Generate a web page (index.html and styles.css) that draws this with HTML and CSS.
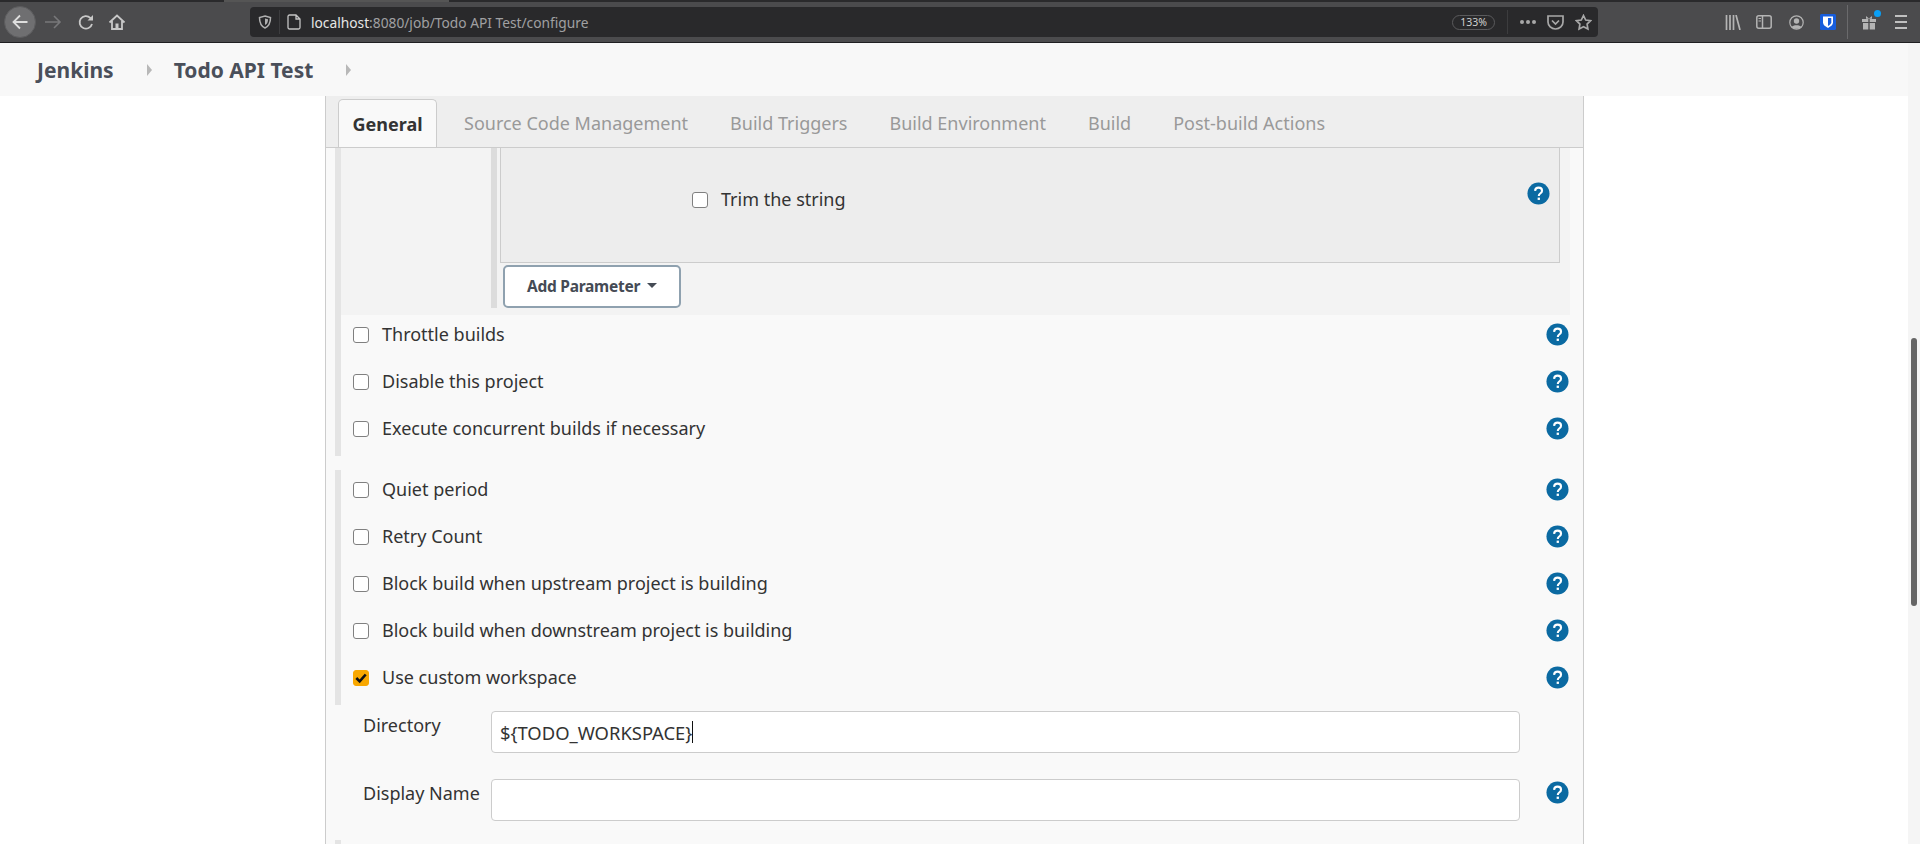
FILE: index.html
```html
<!DOCTYPE html>
<html lang="en">
<head>
<meta charset="utf-8">
<title>Todo API Test Config</title>
<link rel="stylesheet" href="styles.css">
</head>
<body>
<svg class="sprite" width="0" height="0" aria-hidden="true">
  <symbol id="help" viewBox="0 0 24 24">
    <circle cx="12" cy="12" r="11.5" fill="#0b6aa2"/>
    <path d="M8.4 9.2c.2-2.2 1.700-3.300 3.700-3.300 2.100 0 3.600 1.300 3.600 3.100 0 1.500-.8 2.200-1.900 3-1 .7-1.500 1.200-1.500 2.500" fill="none" stroke="#fff" stroke-width="2.200"/>
    <rect x="11.100" y="16.300" width="2.400" height="2.400" fill="#fff"/>
  </symbol>
</svg>
<div class="app">
  <header class="browser">
    <div class="tabstrip"><span class="strip-dark strip-a"></span><span class="strip-gap"></span><span class="strip-dark strip-b"></span></div>
    <div class="toolbar">
      <div class="nav">
        <span class="back"><svg width="20" height="20" viewBox="0 0 20 20"><path d="M17.500 10H3.500M10 3.500 3.500 10l6.500 6.500" fill="none" stroke="#dedede" stroke-width="1.800"/></svg></span>
        <span class="tb tb-fwd"><svg width="18" height="18" viewBox="0 0 18 18"><path d="M1 9h15M10 3l6 6-6 6" fill="none" stroke="#78787a" stroke-width="1.600"/></svg></span>
        <span class="tb tb-reload"><svg width="18" height="18" viewBox="0 0 18 18"><path d="M15 11a6.300 6.300 0 1 1-1.700-6.200L15 6.500" fill="none" stroke="#c8c8c8" stroke-width="1.800"/><path d="M16 2v5.500h-5.500z" fill="#c8c8c8"/></svg></span>
        <span class="tb tb-home"><svg width="18" height="18" viewBox="0 0 18 18"><path d="M1.500 9.500 9 2.500l7.500 7M4 8v8h10V8" fill="none" stroke="#c8c8c8" stroke-width="1.800"/><rect x="7.500" y="10.500" width="3" height="5" fill="#c8c8c8"/></svg></span>
      </div>
      <div class="urlbar">
        <svg class="shield" width="14" height="14" viewBox="0 0 14 14"><path d="M7 1 12.500 2.500c0 5-1 8.500-5.500 10.500C2.500 11 1.500 7.500 1.500 2.500z" fill="none" stroke="#b0b0b0" stroke-width="1.500"/><path d="M7 3.500 10 4.300c0 2.700-.6 4.500-3 5.700z" fill="#b0b0b0"/></svg>
        <span class="url-sep"></span>
        <svg class="page" width="14" height="16" viewBox="0 0 14 16"><path d="M1 2.500A1.500 1.500 0 0 1 2.500 1H9l4 4v8.500a1.500 1.500 0 0 1-1.500 1.500h-9A1.500 1.500 0 0 1 1 13.500zM9 1v4h4" fill="none" stroke="#c4c4c4" stroke-width="1.300"/></svg>
        <span class="url"><span class="host">localhost</span>:8080/job/Todo API Test/configure</span>
        <span class="zoomlevel">133%</span>
        <span class="url-sep url-sep-b"></span>
        <span class="dots"><i></i><i></i><i></i></span>
        <svg class="pocket" width="17" height="15" viewBox="0 0 17 15"><path d="M1 1h15v6a7.500 7 0 0 1-15 0zM5 5.500l3.500 3.500L12 5.500" fill="none" stroke="#a8a8a8" stroke-width="1.700"/></svg>
        <svg class="star" width="17" height="17" viewBox="0 0 17 17"><path d="M8.500 1.500 10.700 6l4.900.7-3.500 3.400.8 4.900-4.400-2.300L4.100 15l.8-4.900L1.400 6.700 6.300 6z" fill="none" stroke="#a8a8a8" stroke-width="1.700"/></svg>
      </div>
      <div class="tools">
        <svg class="t-lib" width="16" height="15" viewBox="0 0 16 15"><path d="M1.500 0v15M5 0v15M8.500 0v15M11 0l4 15" fill="none" stroke="#b4b4b4" stroke-width="1.700"/></svg>
        <svg class="t-side" width="16" height="14" viewBox="0 0 16 14"><rect x=".8" y=".8" width="14.400" height="12.400" rx="2" fill="none" stroke="#b4b4b4" stroke-width="1.500"/><path d="M6.500 1v12" stroke="#b4b4b4" stroke-width="1.500"/><path d="M2.500 3.500h2.500M2.500 6h2.500" stroke="#b4b4b4" stroke-width="1.200"/></svg>
        <svg class="t-acct" width="15" height="15" viewBox="0 0 15 15"><circle cx="7.500" cy="7.500" r="6.700" fill="none" stroke="#b4b4b4" stroke-width="1.200"/><circle cx="7.500" cy="6" r="2.700" fill="#b4b4b4"/><path d="M2.800 12c1-2.400 8.400-2.400 9.400 0-2.500 2.300-6.900 2.300-9.400 0z" fill="#b4b4b4"/></svg>
        <svg class="t-bw" width="16" height="16" viewBox="0 0 16 16"><rect width="16" height="16" rx="1.500" fill="#175ddc"/><path d="M3 2.500h10v6c0 2.500-2.500 4-5 5.500-2.500-1.500-5-3-5-5.500z" fill="#fff"/><path d="M8 4v8c1.800-1 3.300-2.200 3.300-3.700V4z" fill="#175ddc"/></svg>
        <span class="t-sep"></span>
        <span class="t-gift">
          <svg width="14" height="15" viewBox="0 0 14 15"><path d="M0 4h6.300v3H0zM7.700 4H14v3H7.700zM1 8h5.300v6.500H1zM7.700 8H13v6.500H7.700z" fill="#b4b4b4"/><path d="M4 1l3 2.500L10 1v2.800H4z" fill="#b4b4b4"/></svg>
          <i class="badge"></i>
        </span>
        <span class="t-menu"><i></i><i></i><i></i></span>
      </div>
    </div>
  </header>

  <div class="window">
    <div class="doc">
      <nav class="crumbs">
        <a class="crumb">Jenkins</a><span class="caret"></span>
        <a class="crumb">Todo API Test</a><span class="caret"></span>
      </nav>
      <main class="page-area">
        <div class="panel">
          <div class="tabs">
            <span class="tab active">General</span>
            <span class="tab">Source Code Management</span>
            <span class="tab">Build Triggers</span>
            <span class="tab">Build Environment</span>
            <span class="tab">Build</span>
            <span class="tab">Post-build Actions</span>
          </div>
          <div class="panel-body">
            <div class="group group-params">
              <div class="params">
                <div class="params-inner">
                  <div class="param-card">
                    <label class="check check-trim"><span class="box"></span><span>Trim the string</span></label>
                    <svg class="help help-card"><use href="#help"/></svg>
                  </div>
                  <button class="add-btn">Add Parameter<span class="down"></span></button>
                </div>
              </div>
              <div class="row"><label class="check"><span class="box"></span><span>Throttle builds</span></label><svg class="help"><use href="#help"/></svg></div>
              <div class="row"><label class="check"><span class="box"></span><span>Disable this project</span></label><svg class="help"><use href="#help"/></svg></div>
              <div class="row"><label class="check"><span class="box"></span><span>Execute concurrent builds if necessary</span></label><svg class="help"><use href="#help"/></svg></div>
            </div>
            <div class="group group-adv">
              <div class="row"><label class="check"><span class="box"></span><span>Quiet period</span></label><svg class="help"><use href="#help"/></svg></div>
              <div class="row"><label class="check"><span class="box"></span><span>Retry Count</span></label><svg class="help"><use href="#help"/></svg></div>
              <div class="row"><label class="check"><span class="box"></span><span>Block build when upstream project is building</span></label><svg class="help"><use href="#help"/></svg></div>
              <div class="row"><label class="check"><span class="box"></span><span>Block build when downstream project is building</span></label><svg class="help"><use href="#help"/></svg></div>
              <div class="row"><label class="check"><span class="box checked"><svg width="12" height="12" viewBox="0 0 12 12"><path d="M1.300 6l3.400 3.400 6-6.900" fill="none" stroke="#111" stroke-width="2.600"/></svg></span><span>Use custom workspace</span></label><svg class="help"><use href="#help"/></svg></div>
            </div>
            <div class="field field-first">
              <label class="field-label">Directory</label>
              <div class="input"><span>${TODO_WORKSPACE}</span><i class="cursor"></i></div>
            </div>
            <div class="field">
              <label class="field-label">Display Name</label>
              <div class="input"></div>
              <svg class="help"><use href="#help"/></svg>
            </div>
            <div class="group group-next"></div>
          </div>
        </div>
      </main>
    </div>
    <aside class="scrollbar"><span class="thumb"></span></aside>
  </div>
</div>
</body>
</html>
```
FILE: styles.css
```css
* { box-sizing: border-box; }
html, body { margin: 0; height: 100%; }
body { overflow: hidden; background: #fff; font-family: "Noto Sans", "Open Sans", sans-serif; color: #333; }
.sprite { position: absolute; }
.app { display: flex; flex-direction: column; width: 1920px; height: 844px; overflow: hidden; }

/* Browser chrome */
.browser { flex: none; height: 43px; background: #4b4b4d; border-bottom: 1px solid #1f1f21; }
.tabstrip { display: flex; height: 2px; }
.strip-dark { background: #2a2a2c; height: 2px; }
.strip-a { width: 224px; }
.strip-gap { width: 225px; background: #555; }
.strip-b { flex: 1; }
.toolbar { display: flex; align-items: center; height: 40px; }
.nav { display: flex; align-items: center; width: 250px; padding-left: 4px; flex: none; }
.back { width: 32px; height: 32px; border-radius: 50%; background: #6f6f71; display: flex; align-items: center; justify-content: center; border: 1px solid #5c5c5e; }
.tb { width: 18px; height: 18px; display: flex; }
.tb svg { display: block; }
.tb-fwd { margin-left: 8px; }
.tb-reload { margin-left: 15px; }
.tb-home { margin-left: 13px; }
.urlbar { flex: none; width: 1348px; height: 30px; background: #29292b; border-radius: 4px; display: flex; align-items: center; }
.shield { margin-left: 8px; flex: none; }
.url-sep { width: 1px; height: 24px; background: #3c3c3e; margin-left: 7px; flex: none; }
.page { margin-left: 7px; flex: none; }
.url { margin-left: 10px; font-size: 13.750px; color: #a0a0a2; flex: 1; white-space: nowrap; }
.host { color: #e6e6e6; }
.zoomlevel { width: 43px; height: 15px; border: 1px solid #5a5a5c; border-radius: 8px; font-size: 10.500px; color: #cfcfcf; display: flex; align-items: center; justify-content: center; margin-right: 12px; }
.url-sep-b { margin-left: 0; margin-right: 12px; }
.dots { display: flex; gap: 2px; margin-right: 11px; }
.dots i { width: 4px; height: 4px; border-radius: 50%; background: #a8a8a8; }
.pocket { margin-right: 11px; flex: none; }
.star { margin-right: 6px; flex: none; }
.tools { flex: 1; display: flex; align-items: center; padding-left: 127px; }
.t-lib { margin-right: 15px; }
.t-side { margin-right: 17px; }
.t-acct { margin-right: 16px; }
.t-bw { margin-right: 11px; }
.t-sep { width: 1px; height: 34px; background: #6a6a6c; margin-right: 14px; }
.t-gift { position: relative; display: flex; width: 14px; margin-right: 19px; }
.badge { position: absolute; right: -5px; top: -5px; width: 7px; height: 7px; border-radius: 50%; background: #0a9ff5; }
.t-menu { display: flex; flex-direction: column; gap: 4px; width: 12px; }
.t-menu i { height: 2px; background: #c0c0c0; }

/* Window content and scrollbar */
.window { flex: 1; display: flex; min-height: 0; }
.doc { flex: 1; display: flex; flex-direction: column; min-width: 0; }
.scrollbar { flex: none; width: 12px; background: #f5f5f5; padding: 295px 3px 0; }
.thumb { display: block; width: 6px; height: 268px; background: #666; border-radius: 3px; }

/* Breadcrumbs */
.crumbs { flex: none; height: 53px; background: #f8f8f8; display: flex; align-items: center; padding-left: 37px; font-size: 21px; font-weight: 700; color: #4a4f5a; }
.crumb { white-space: nowrap; }
.caret { width: 0; height: 0; border: 6px solid transparent; border-left: 5px solid #b8b8b8; border-right: 0; margin: 0 22px 0 33px; }

/* Page */
.page-area { flex: 1; padding-left: 325px; overflow: hidden; background: #fff; }
.panel { width: 1259px; height: 100%; background: #f9f9f9; border-left: 1px solid #ccc; border-right: 1px solid #ccc; }
.tabs { display: flex; align-items: flex-end; height: 52px; background: #eee; border-bottom: 1px solid #ccc; padding-left: 12px; font-size: 18px; color: #999; }
.tab { display: flex; align-items: center; height: 48px; margin-right: 42px; white-space: nowrap; }
.tab.active { background: #f9f9f9; border: 1px solid #ccc; border-bottom: 0; border-radius: 5px 5px 0 0; font-weight: 700; color: #333; width: 99px; justify-content: center; margin-right: 27px; }

.panel-body { font-size: 18px; }
.group { border-left: 6px solid #e4e4e4; margin-left: 9px; }
.params { background: #f3f3f3; margin-right: 13px; height: 167px; padding-left: 150px; }
.params-inner { height: 160px; border-left: 6px solid #dcdcdc; padding-left: 3px; }
.param-card { position: relative; height: 115px; width: 1060px; background: #ededed; border: 1px solid #ccc; border-top: 0; }
.add-btn { display: flex; align-items: center; justify-content: center; gap: 7px; margin: 2px 0 0 3px; width: 178px; height: 43px; padding: 0 0 2px; background: #fff; border: 2px solid #8fa1af; border-radius: 5px; font: 700 15.500px "Noto Sans", sans-serif; letter-spacing: -.25px; color: #454b55; }
.down { width: 0; height: 0; border: 5px solid transparent; border-top: 5px solid #454b55; border-bottom: 0; }

.check { display: flex; align-items: center; gap: 13px; height: 23px; line-height: 23px; white-space: nowrap; color: #333; }
.box { width: 16px; height: 16px; flex: none; background: #fff; border: 1px solid #808080; border-radius: 3px; display: flex; align-items: center; justify-content: center; }
.box.checked { background: #f9a800; border-color: #f9a800; }
.check-trim { position: absolute; left: 191px; top: 40px; }
.row { display: flex; align-items: flex-start; justify-content: space-between; height: 47px; padding: 8px 14px 0 12px; }
.help { display: block; width: 23px; height: 23px; flex: none; }
.help-card { position: absolute; right: 9px; top: 34px; }
.group-adv { margin-top: 14px; }
.field { display: grid; grid-template-columns: 128px 1029px 1fr; align-items: start; padding: 7px 0 0 37px; height: 68px; }
.field-first { padding-top: 6px; height: 67px; }
.field-label { line-height: 24px; margin-top: 2px; white-space: nowrap; }
.input { height: 42px; background: #fff; border: 1px solid #ccc; border-radius: 4px; display: flex; align-items: center; padding-left: 8px; font-size: 18.400px; color: #333; }
.field .help { margin: 2px 0 0 26px; }
.cursor { width: 1px; height: 22px; background: #111; }
.group-next { height: 6px; }
```
